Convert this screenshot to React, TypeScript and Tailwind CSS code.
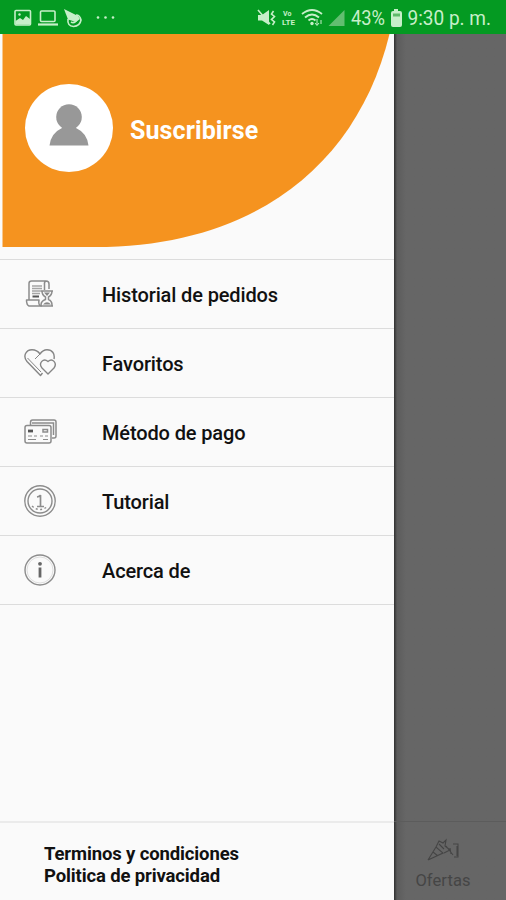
import React from "react";

// Menu icons
function OrdersIcon() {
  return (
    <svg width="32" height="32" viewBox="0 0 32 32" fill="none" stroke="#8c8c8c" strokeWidth="1.5" strokeLinejoin="round">
      <path d="M5 22V5.500Q5 3 7.500 3H22Q25 3 25 6V11M22 3Q20 3.500 20.500 7V12M5 22H15Q14 27 17 28H5Q2.500 27 2.500 22H5" />
      <path d="M8 8H18M8 10.500H18M8 13H17M8 15.500H16" stroke="#a5a5a5" />
      <path d="M8.500 18.500H15" stroke="#555" strokeWidth="2" />
      <path d="M17 13H29M18 13Q18 17 21.500 19V21.500Q17 23 17 27V28H28V27Q28 23 24.500 21.500V19Q28 17 28 13M17 28H29" />
      <path d="M20 14.500H26L23 18ZM19 26.500Q23 22 27 26.500Z" fill="#888" stroke="none" />
    </svg>
  );
}

function HeartsIcon() {
  return (
    <svg width="32" height="32" viewBox="0 0 32 32" fill="none" stroke="#858585" strokeWidth="1.400" strokeLinejoin="round">
      <path d="M18.500 26L16.500 28.500L3 14.500C-1.500 9 2 2.700 8 2.700C12 2.700 14 4 16 7C18 4 20 2.700 23 2.700C28.500 2.700 31 7 30 12" />
      <path d="M24 27L18 21C14 16 19.500 10.500 24 14.500C28.500 10.500 33.500 16 30 21Z" />
      <path d="M11 12L16 7M3.500 11L17 25" strokeWidth="1" />
    </svg>
  );
}

function CardsIcon() {
  return (
    <svg width="34" height="32" viewBox="0 0 34 32" fill="none" stroke="#8c8c8c" strokeWidth="1.500">
      <path d="M6.500 10V6.500Q6.500 4 8.500 4H30Q32 4 32 6V20Q32 22 30 22H28M8 7H29.500V19" />
      <rect x="1" y="9.500" width="26" height="17.500" rx="2" fill="#fafafa" />
      <path d="M4 15H9" stroke="#555" strokeWidth="2.800" />
      <rect x="19" y="13.500" width="4.500" height="2.500" />
      <path d="M4 20H8M10 20H13M16 20H19M21 20H24M4 23.500H12M19 23.500H24" strokeWidth="1.200" />
    </svg>
  );
}

function CoinIcon() {
  return (
    <svg width="32" height="32" viewBox="0 0 32 32" fill="none" stroke="#8c8c8c" strokeWidth="1.400">
      <circle cx="16" cy="16" r="15.200" />
      <circle cx="16" cy="16" r="12" strokeWidth="1.400" />
      <path d="M8 21Q16 28 24 21" strokeDasharray="2 2.500" />
      <path d="M13 12Q16 11.500 16.500 10V21.500M13 21.500H20" strokeWidth="1.700" />
    </svg>
  );
}

function InfoIcon() {
  return (
    <svg width="32" height="32" viewBox="0 0 32 32" fill="none" stroke="#8c8c8c" strokeWidth="1.400">
      <circle cx="16" cy="16" r="15" />
      <circle cx="16" cy="16" r="13" stroke="#dedede" strokeWidth="1" />
      <circle cx="16" cy="9.800" r="1.900" fill="#666" stroke="none" />
      <path d="M16 13.500V23.500" stroke="#666" strokeWidth="2.800" />
    </svg>
  );
}

const menuItems = [
  { label: "Historial de pedidos", icon: <OrdersIcon /> },
  { label: "Favoritos", icon: <HeartsIcon /> },
  { label: "Método de pago", icon: <CardsIcon /> },
  { label: "Tutorial", icon: <CoinIcon /> },
  { label: "Acerca de", icon: <InfoIcon /> },
];

function StatusBar() {
  return (
    <header className="flex h-[34px] shrink-0 items-center bg-[#049a22] pt-0.5 text-[#c7efc9]">
      <svg className="ml-3.5 shrink-0" width="104" height="24" viewBox="14 4 104 24" fill="none" stroke="currentColor" strokeWidth="1.600">
        <rect x="15" y="8.500" width="15.500" height="14.500" rx="1" />
        <path d="M15.500 22.500V19L20 16L23 18L26 14L30 17V22.500Z" fill="currentColor" stroke="none" />
        <circle cx="19.500" cy="12.500" r="1.200" fill="currentColor" stroke="none" />
        <rect x="40.500" y="9" width="14.500" height="10.500" rx="1" />
        <path d="M38 22.500H58" strokeWidth="2.200" />
        <path d="M64 7L78 14L80 17L76 20L68 17.500Z" fill="currentColor" stroke="none" />
        <path d="M68 17Q67 24 73.500 24.500Q80 24 81 18Q80 13 76 13M71 20Q74 22 77 18" />
        <g fill="currentColor" stroke="none">
          <circle cx="98" cy="15.500" r="1.300" />
          <circle cx="105.500" cy="15.500" r="1.300" />
          <circle cx="113" cy="15.500" r="1.300" />
        </g>
      </svg>
      <svg className="ml-[138px] shrink-0" width="70" height="24" viewBox="256 4 70 24" fill="none" stroke="currentColor" strokeWidth="1.600">
        <path d="M258 13H262L269 8V23L262 18.500H258Z" fill="currentColor" stroke="none" />
        <path d="M258 8L270 22M273.500 9L271.500 12L274.500 14.500L271.500 17.500L274.500 20L272.500 23" />
        <path d="M302 12Q312 4 322 12M305 15.500Q312 9.500 319 15.500M308.500 18.500Q312 15.500 315.500 18.500" strokeWidth="1.900" />
        <circle cx="312" cy="21.500" r="1.700" fill="currentColor" stroke="none" />
        <path d="M317 17V23M315 21L317 23.500L319 21M321 18V22" strokeWidth="1" />
        <g fill="currentColor" stroke="none" fontFamily="Roboto" fontWeight="700" fontSize="7">
          <text x="283" y="13.500">Vo</text>
          <text x="282" y="22.500" textLength="13" lengthAdjust="spacingAndGlyphs">LTE</text>
        </g>
      </svg>
      <svg className="ml-0.5 shrink-0" width="17" height="24" viewBox="328 4 17 24" fill="#62be70">
        <path d="M344.500 8V24H328.500Z" />
      </svg>
      <svg className="ml-[5px] shrink-0" width="142" height="28" viewBox="350 3 142 28" fill="currentColor">
        <text x="351" y="24" fontFamily="Roboto" fontSize="19.500" textLength="34" lengthAdjust="spacingAndGlyphs">43%</text>
        <path d="M394 8H398V10H400Q402 10 402 12V24Q402 26 400 26H393Q391 26 391 24V12Q391 10 393 10H394Z" />
        <path d="M393 12.500H400V15.500H393Z" fill="#5eba69" />
        <text x="407.500" y="24" fontFamily="Roboto" fontSize="19.500" textLength="83.500" lengthAdjust="spacingAndGlyphs">9:30 p. m.</text>
      </svg>
    </header>
  );
}

function ProfileHeader() {
  return (
    <section className="relative flex h-[226px] shrink-0 items-center border-b border-[#dcdcdc] pb-[37px] pl-[25px]">
      <svg className="absolute left-0 top-0" width="394" height="225" viewBox="0 34 394 225">
        <path d="M2.500 34H389.500C358 164 255 247 95 247H2.500Z" fill="#f5931f" />
      </svg>
      <div className="relative flex size-[88px] shrink-0 items-center justify-center rounded-full bg-white">
        <svg className="-mt-1.5" width="40" height="42" viewBox="0 0 40 42" fill="#989898">
          <circle cx="20" cy="13" r="12.800" />
          <path d="M.5 41.500Q2 29 13 24V20H27V24Q38 29 39.500 41.500Z" />
        </svg>
      </div>
      <span className="relative ml-[17px] mt-[5px] text-[25px] font-bold leading-8 tracking-[0.100px] text-white">Suscribirse</span>
    </section>
  );
}

export default function App() {
  return (
    <div className="flex h-[900px] w-[506px] flex-col overflow-hidden bg-[#666666] font-[Roboto,sans-serif]">
      <StatusBar />
      <div className="flex min-h-0 flex-1">
        <aside className="flex w-[394px] shrink-0 flex-col bg-[#fafafa] text-[#111]">
          <ProfileHeader />
          <nav>
            {menuItems.map((item) => (
              <a key={item.label} className="flex h-[69px] items-center border-b border-[#dcdcdc]">
                <span className="ml-6 w-[78px] shrink-0">{item.icon}</span>
                <span className="mt-0.5 whitespace-nowrap text-[20px] font-medium leading-6 tracking-[-0.130px]">{item.label}</span>
              </a>
            ))}
          </nav>
          <footer className="mt-auto h-[79px] border-t-2 border-[#ebebeb] pl-11 pt-[21px] text-[18.500px] font-bold leading-[21.500px] tracking-[-0.130px]">
            <p>Terminos y condiciones</p>
            <p>Politica de privacidad</p>
          </footer>
        </aside>
        {/* Dimmed page behind the drawer */}
        <main className="flex flex-1 flex-col justify-end bg-linear-to-r from-[#303030] via-[#5c5c5c] via-[3px] to-[#666666] to-[12px]">
          <div className="flex h-[79px] flex-col items-center border-t border-[#5c5c5c] pr-[14px] pt-[16px] text-[#454545]">
            <svg width="34" height="25" viewBox="0 0 34 25" fill="none" stroke="currentColor" strokeWidth="1.100">
              <path d="M2 22L10 9L17 15L2 22M10 9L13 3L17 5L20 2L19 8L24 12L18 15M7 14L12 18M13 6L18 11M27 6H32V19H28M20 8L27 17M24 10L25 16M31 8V18" />
            </svg>
            <span className="mt-2 text-[16.500px] leading-5 tracking-[0.100px]">Ofertas</span>
          </div>
        </main>
      </div>
    </div>
  );
}
